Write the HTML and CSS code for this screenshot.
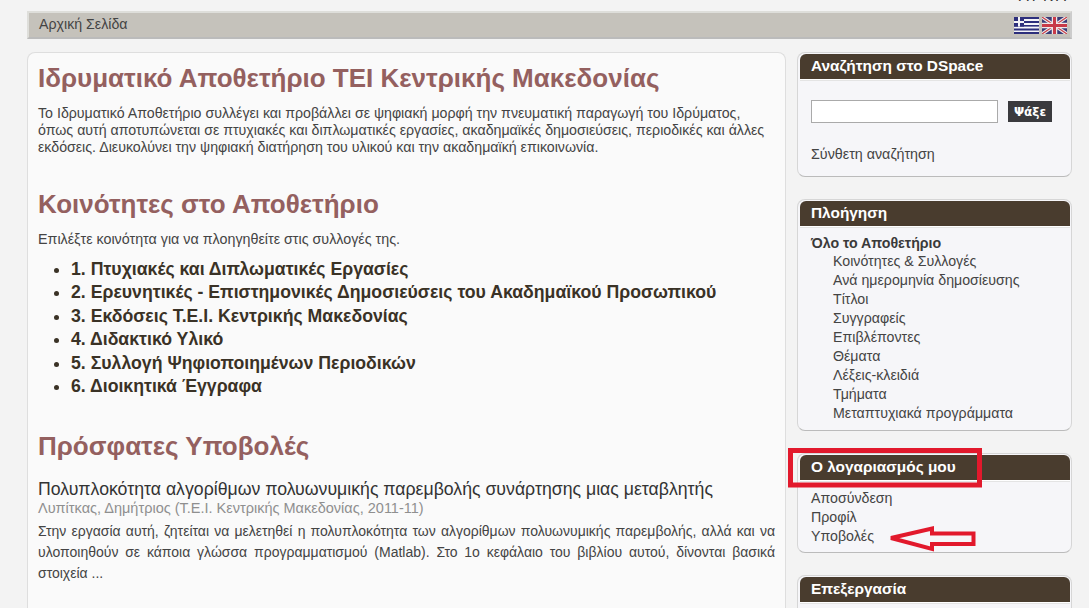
FILE: index.html
```html
<!DOCTYPE html>
<html lang="el">
<head>
<meta charset="utf-8">
<title>Ιδρυματικό Αποθετήριο</title>
<link rel="stylesheet" href="styles.css">
</head>
<body>
<div class="topstrip"><span class="toptext">ΛΓΚΛ</span></div>
<nav class="trail">
  <a class="trail-link">Αρχική Σελίδα</a>
  <div class="flags">
    <svg width="25" height="17" viewBox="0 0 25 17"><rect width="25" height="17" fill="#f4f4f8"/><g fill="#2d2f7c"><rect y="0" width="25" height="2"/><rect y="4" width="25" height="2"/><rect y="8" width="25" height="1.6"/><rect y="11.5" width="25" height="2"/><rect y="15" width="25" height="2"/><rect width="10" height="9.6"/></g><rect x="4" width="2" height="9.6" fill="#f4f4f8"/><rect y="4" width="10" height="2" fill="#f4f4f8"/></svg>
    <svg width="25" height="17" viewBox="0 0 25 17"><rect width="25" height="17" fill="#3a3c78"/><path d="M0 0L25 17M25 0L0 17" stroke="#eee" stroke-width="3.4"/><path d="M0 0L25 17M25 0L0 17" stroke="#c8404a" stroke-width="1.2"/><path d="M12.5 0V17M0 8.5H25" stroke="#f0e8e8" stroke-width="5.5"/><path d="M12.5 0V17M0 8.5H25" stroke="#c83a48" stroke-width="3"/></svg>
  </div>
</nav>
<div class="columns">
  <main class="main">
    <h1 class="h-first">Ιδρυματικό Αποθετήριο ΤΕΙ Κεντρικής Μακεδονίας</h1>
    <p class="intro">Το Ιδρυματικό Αποθετήριο συλλέγει και προβάλλει σε ψηφιακή μορφή την πνευματική παραγωγή του Ιδρύματος, όπως αυτή αποτυπώνεται σε πτυχιακές και διπλωματικές εργασίες, ακαδημαϊκές δημοσιεύσεις, περιοδικές και άλλες εκδόσεις. Διευκολύνει την ψηφιακή διατήρηση του υλικού και την ακαδημαϊκή επικοινωνία.</p>
    <h2 class="h-second">Κοινότητες στο Αποθετήριο</h2>
    <p class="lead">Επιλέξτε κοινότητα για να πλοηγηθείτε στις συλλογές της.</p>
    <ul class="communities">
      <li>1. Πτυχιακές και Διπλωματικές Εργασίες</li>
      <li>2. Ερευνητικές - Επιστημονικές Δημοσιεύσεις του Ακαδημαϊκού Προσωπικού</li>
      <li>3. Εκδόσεις Τ.Ε.Ι. Κεντρικής Μακεδονίας</li>
      <li>4. Διδακτικό Υλικό</li>
      <li>5. Συλλογή Ψηφιοποιημένων Περιοδικών</li>
      <li>6. Διοικητικά Έγγραφα</li>
    </ul>
    <h2 class="h-third">Πρόσφατες Υποβολές</h2>
    <h3 class="item-title">Πολυπλοκότητα αλγορίθμων πολυωνυμικής παρεμβολής συνάρτησης μιας μεταβλητής</h3>
    <div class="item-meta">Λυπίτκας, Δημήτριος (Τ.Ε.Ι. Κεντρικής Μακεδονίας, 2011-11)</div>
    <p class="item-abstract">Στην εργασία αυτή, ζητείται να μελετηθεί η πολυπλοκότητα των αλγορίθμων πολυωνυμικής παρεμβολής, αλλά και να υλοποιηθούν σε κάποια γλώσσα προγραμματισμού (Matlab). Στο 1ο κεφάλαιο του βιβλίου αυτού, δίνονται βασικά στοιχεία ...</p>
  </main>
  <aside class="side">
    <section class="box box-search">
      <h4 class="box-head">Αναζήτηση στο DSpace</h4>
      <div class="search-body">
        <div class="search-row"><input class="search-input" type="text"><button class="search-btn">Ψάξε</button></div>
        <a class="side-link adv">Σύνθετη αναζήτηση</a>
      </div>
    </section>
    <section class="box box-nav">
      <h4 class="box-head">Πλοήγηση</h4>
      <div class="nav-body">
        <div class="nav-title">Όλο το Αποθετήριο</div>
        <ul class="nav-list">
          <li>Κοινότητες &amp; Συλλογές</li>
          <li>Ανά ημερομηνία δημοσίευσης</li>
          <li>Τίτλοι</li>
          <li>Συγγραφείς</li>
          <li>Επιβλέποντες</li>
          <li>Θέματα</li>
          <li>Λέξεις-κλειδιά</li>
          <li>Τμήματα</li>
          <li>Μεταπτυχιακά προγράμματα</li>
        </ul>
      </div>
    </section>
    <section class="box box-account">
      <h4 class="box-head">Ο λογαριασμός μου</h4>
      <ul class="account-list">
        <li>Αποσύνδεση</li>
        <li>Προφίλ</li>
        <li>Υποβολές</li>
      </ul>
    </section>
    <section class="box box-edit">
      <h4 class="box-head">Επεξεργασία</h4>
    </section>
  </aside>
</div>
<svg class="annot" width="1089" height="608" viewBox="0 0 1089 608">
  <rect x="790.5" y="450.5" width="189" height="34.5" fill="none" stroke="#e2192c" stroke-width="5"/>
  <path d="M891 538L932 528.5V533.5H973.500V544H932V549Z" fill="none" stroke="#e2192c" stroke-width="4"/>
</svg>
</body>
</html>
```
FILE: styles.css
```css
html, body { margin: 0; padding: 0; }
body {
  width: 1089px; height: 608px; overflow: hidden; position: relative;
  background: #f3f3f3; color: #444;
  font-family: "Liberation Sans", Arial, sans-serif; font-size: 14px;
}
.topstrip { height: 11px; overflow: hidden; display: flex; justify-content: flex-end; padding-right: 20px; }
.toptext { font-size: 15px; line-height: 15px; margin-top: -12px; letter-spacing: 3px; color: #333; }
.trail {
  margin-left: 27px; width: 1035px; height: 24px; padding: 0 3px;
  border: 2px solid #dededa; border-bottom-color: #bbb; border-right-color: #ccc;
  background: #c5c2bb; display: flex; align-items: center; justify-content: space-between;
}
.trail-link { color: #444; margin: -2px 0 0 7px; font-size: 14.2px; }
.flags { display: flex; gap: 3px; }
.columns { display: flex; gap: 11px; margin: 13px 0 0 27px; align-items: flex-start; }
.main {
  width: 737px; height: 555px; padding: 0 10px; flex: none;
  background: #fafafa; border: 1px solid #dedede; border-bottom: 0; border-radius: 8px 8px 0 0;
}
h1, h2 { color: #94605f; font-weight: bold; margin: 0; }
.h-first { font-size: 26px; line-height: 30px; margin-top: 10px; }
.h-second { font-size: 26px; line-height: 30px; margin-top: 33px; }
.h-third { font-size: 26px; line-height: 30px; margin-top: 33px; }
.intro { margin: 12px 0 0; line-height: 17px; font-size: 14.2px; color: #444; }
.lead { margin: 12px 0 0; line-height: 17px; font-size: 14.3px; }
.communities { margin: 10px 0 0; padding: 0 0 0 33px; }
.communities li { font-size: 17.7px; line-height: 23.4px; font-weight: bold; color: #3a3226; }
.item-title { margin: 19px 0 -1px; font-size: 17.7px; line-height: 19px; font-weight: normal; color: #333; }
.item-meta { font-size: 14.5px; line-height: 20px; color: #8f8f8f; }
.item-abstract { margin: 3px 0 0; font-size: 14px; line-height: 21px; text-align: justify; color: #444; }
.side { width: 275px; flex: none; display: flex; flex-direction: column; }
.box {
  box-sizing: border-box; width: 275px; background: #f6f6f9;
  border: 1px solid #d6d6d6; border-bottom-color: #bbb; border-radius: 8px; padding-top: 1px;
}
.box-head {
  margin: 0 1px 0 2px; height: 25px; line-height: 23px; padding-left: 11px;
  background: #493c2e; color: #fff; font-size: 15.4px; font-weight: bold; border-radius: 6px 6px 0 0;
  box-shadow: 0 1px 0 #fff, 0 2px 0 #e4e4e4;
}
.box-search { height: 125px; }
.box-nav { height: 232px; margin-top: 22px; }
.box-account { height: 100px; margin-top: 22px; }
.box-edit { height: 33px; margin-top: 22px; border-bottom: 0; border-radius: 8px 8px 0 0; }
.search-body { padding: 21px 13px 0; }
.search-row { display: flex; align-items: center; gap: 10px; }
.search-input { box-sizing: border-box; width: 187px; height: 23px; padding: 0; background: #fff; border: 1px solid #aaa; }
.search-btn {
  box-sizing: border-box; width: 44px; height: 21px; padding: 0; border: 0;
  background: #3a3a3e; color: #fff; font-family: "DejaVu Sans", sans-serif; font-size: 12px; font-weight: bold;
}
.side-link { display: block; color: #444; font-size: 14.3px; }
.adv { margin-top: 23px; }
.nav-body { padding: 8px 13px 0; font-size: 14.2px; line-height: 19px; }
.nav-title { font-weight: bold; color: #3a3a3a; line-height: 18px; }
.nav-list, .account-list { list-style: none; margin: 0; padding: 0; }
.nav-list { padding-left: 22px; }
.account-list { padding: 9px 13px 0; line-height: 19px; font-size: 14.2px; }
.annot { position: absolute; top: 0; left: 0; }
```
